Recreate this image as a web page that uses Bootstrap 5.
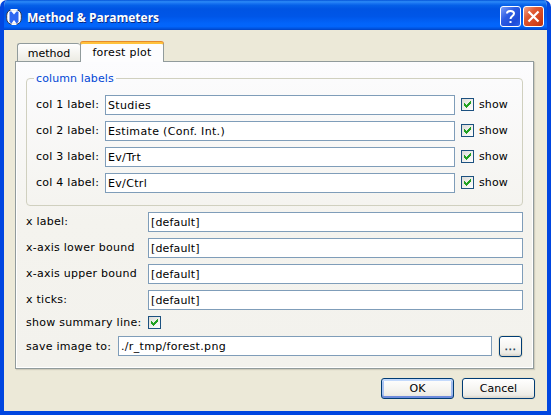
<!DOCTYPE html>
<html lang="en">
<head>
<meta charset="utf-8">
<title>Method &amp; Parameters</title>
<link href="https://cdn.jsdelivr.net/npm/bootstrap@5.3.0/dist/css/bootstrap.min.css" rel="stylesheet">
<style>
html,body{width:551px;height:415px;overflow:hidden}
body{margin:0;background:#fff;font:11px/14px "DejaVu Sans",sans-serif;color:#000}
.xp-window{width:551px;height:415px;background:#ece9d8;border-radius:7px 7px 0 0;overflow:hidden;border:solid #0046e0;border-width:0 4px 4px;position:relative}
.xp-window::after{content:"";position:absolute;inset:0 -4px -4px;border:solid #001ea0;border-width:0 1px 2px;border-left-color:#0831d9;border-right-width:2px;border-radius:7px 7px 0 0;pointer-events:none}
.titlebar{height:30px;margin:0 -4px;padding:3px 7px 0 6px;background:linear-gradient(#0453d8 0,#2d8cf8 6%,#1c77f2 10%,#0560e8 18%,#0054e3 30%,#0056e8 55%,#0264fa 78%,#0265fc 88%,#0054e0 95%,#0042c4 100%)}
.caption-text{font:bold 13px/16px "Open Sans",sans-serif;color:#fff;text-shadow:1px 1px 0 #0a2a84;white-space:nowrap;padding-left:5px}
.caption-text span{display:inline-block;transform:scaleX(.925);transform-origin:0 50%}
.cap-btn{width:21px;height:21px;border:1px solid #fff;border-radius:3px;background:linear-gradient(135deg,#7d9ff8,#2c5be3 40%,#1d4cd8 75%,#2c64ee);padding:0}
.cap-btn svg{display:block}
.cap-close{background:linear-gradient(135deg,#f3a48b,#e05a33 35%,#d1401a 75%,#b93210)}
.tabs-row{height:31px;padding:11px 0 0 12px}
.tab-item{border:1px solid #919b9c;border-bottom:0;border-radius:3px 3px 0 0;padding:0;text-align:center;color:#000;white-space:nowrap;font:11px/14px "DejaVu Sans",sans-serif}
.tab-method{width:63px;height:18px;padding-top:2px;background:linear-gradient(#fff,#ecebe3);border-right:0;margin-left:1px}
.tab-plot{width:84px;height:20px;background:#fdfdfe;border-top:2px solid #ffc23c;position:relative;z-index:2;margin-bottom:-1px;box-shadow:0 -1px 0 #e68b2c;letter-spacing:.25px}
.pane{margin-left:11px;width:519px;height:308px;border:1px solid #919b9c;background:linear-gradient(#fcfcfe,#f4f3ee 52%,#f3f2ed);box-shadow:1px 1px 1px #cfccbc,inset -1px -1px #fff,inset 1px 0 #fff;padding:9px 10px 0}
.group-box{width:497px;height:135px;margin-bottom:1px;position:relative;padding-top:24px}
.group-box::before{content:"";position:absolute;inset:7px 0 0;border:1px solid #d0d0bf;border-radius:4px}
.group-title{position:absolute;left:8px;top:1px;padding:0 2px;background:#fbfbfd;color:#0046d5;white-space:nowrap;letter-spacing:.12px}
.form-line{height:26px}
.lbl{white-space:nowrap;line-height:20px;flex:none;letter-spacing:.25px}
.xp-input.form-control{height:20px;min-height:0;border:1px solid #7f9db9;border-radius:0;background:#fff;padding:1px 2px 0;font:11px/17px "DejaVu Sans",sans-serif;letter-spacing:.33px;color:#000;box-shadow:none}
.xp-input.tight{letter-spacing:.15px}
.xp-check{width:13px;height:13px;border:1px solid #1c5180;background:linear-gradient(135deg,#dcdcd7,#fff);flex:none}
.xp-check svg{display:block}
.group-box .form-line{padding-left:10px}
.group-box .lbl{width:69px}
.group-box .xp-input{width:350px}
.group-box .xp-check{margin:3px 5px 0 6px}
.show-text{line-height:20px;letter-spacing:.1px}
.lower{padding-top:5px}
.lower .lbl{width:122px}
.lower .xp-input{width:375px}
.summary-line{height:20px}
.lower .summary-line .lbl{line-height:14px}
.lower .save-line .lbl{width:92px;line-height:22px}
.lower .save-line .xp-input{width:374px}
.xp-btn.btn{border:1px solid #003c74;border-radius:3px;background:linear-gradient(#fff,#f5f4f0 55%,#ecebe5 85%,#d8d2c6);font:11px/19px "DejaVu Sans",sans-serif;color:#000;padding:0;width:73px;height:21px;box-shadow:0 0 0 1px #e6e3d2}
.xp-btn.xp-default{box-shadow:inset 0 2px #c4dafc,inset 0 -2px #6d8bdc,inset 2px 0 #a9c3f2,inset -2px 0 #a0bbee}
.xp-btn.xp-dots{width:23px;margin-left:7px;font-size:11px;letter-spacing:.5px;line-height:20px;-webkit-text-stroke:.3px #153550;color:#153550}
.actions{gap:8px;padding:9px 12px 0 0}
</style>
<script src="https://cdn.jsdelivr.net/npm/bootstrap@5.3.0/dist/js/bootstrap.bundle.min.js"></script>
</head>
<body>
<svg class="d-none"><symbol id="tick" viewBox="0 0 11 11"><path d="M2 4h1v1h1v1h1V5h1V4h1V3h1V2h1v3H8v1H7v1H6v1H5v1H4V8H3V7H2z" fill="#21a121"/></symbol></svg>
<div class="xp-window">
 <header class="titlebar d-flex align-items-center">
  <svg class="flex-shrink-0" width="16" height="16" viewBox="0 0 16 16"><rect x=".7" y=".7" width="14.600" height="14.600" rx="5.500" fill="#fff" stroke="#343b50"/><path d="M4.500 0h7v1.500h-7zM5.500 14.500h5V16h-5z" fill="#fff"/><path d="M3.500 2.500h2L8 5.500l2.500-3h2V13l-2 1.500L8 11l-2.500 3.500-2-1.500z" fill="#2f68f2"/></svg>
  <div class="caption-text"><span>Method &amp; Parameters</span></div>
  <div class="ms-auto d-flex" style="gap:2px">
   <button class="cap-btn" aria-label="Help"><svg width="19" height="19" viewBox="0 0 19 19"><path d="M6 6.500C6 3 13 3 13 6.500c0 2.500-3.500 2.500-3.500 5.500" fill="none" stroke="#fff" stroke-width="2"/><path d="M8.500 14h2v2h-2z" fill="#fff"/></svg></button>
   <button class="cap-btn cap-close" aria-label="Close"><svg width="19" height="19" viewBox="0 0 19 19"><path d="M4.500 4.500l10 10M14.500 4.500l-10 10" stroke="#fff" stroke-width="2.200"/></svg></button>
  </div>
 </header>
 <div class="tabs-row d-flex align-items-end">
  <button class="tab-item tab-method">method</button>
  <button class="tab-item tab-plot">forest plot</button>
 </div>
 <main class="pane">
  <section class="group-box">
   <div class="group-title">column labels</div>
   <div class="form-line d-flex"><label class="lbl">col 1 label:</label><input class="form-control xp-input" value="Studies"><span class="xp-check"><svg width="11" height="11"><use href="#tick"/></svg></span><span class="show-text">show</span></div>
   <div class="form-line d-flex"><label class="lbl">col 2 label:</label><input class="form-control xp-input" value="Estimate (Conf. Int.)"><span class="xp-check"><svg width="11" height="11"><use href="#tick"/></svg></span><span class="show-text">show</span></div>
   <div class="form-line d-flex"><label class="lbl">col 3 label:</label><input class="form-control xp-input" value="Ev/Trt"><span class="xp-check"><svg width="11" height="11"><use href="#tick"/></svg></span><span class="show-text">show</span></div>
   <div class="form-line d-flex"><label class="lbl">col 4 label:</label><input class="form-control xp-input" value="Ev/Ctrl"><span class="xp-check"><svg width="11" height="11"><use href="#tick"/></svg></span><span class="show-text">show</span></div>
  </section>
  <section class="lower">
   <div class="form-line d-flex"><label class="lbl">x label:</label><input class="form-control xp-input tight" value="[default]"></div>
   <div class="form-line d-flex"><label class="lbl">x-axis lower bound</label><input class="form-control xp-input tight" value="[default]"></div>
   <div class="form-line d-flex"><label class="lbl">x-axis upper bound</label><input class="form-control xp-input tight" value="[default]"></div>
   <div class="form-line d-flex"><label class="lbl">x ticks:</label><input class="form-control xp-input tight" value="[default]"></div>
   <div class="summary-line d-flex"><label class="lbl">show summary line:</label><span class="xp-check"><svg width="11" height="11"><use href="#tick"/></svg></span></div>
   <div class="save-line d-flex"><label class="lbl">save image to:</label><input class="form-control xp-input" value="./r_tmp/forest.png"><button class="btn xp-btn xp-dots">...</button></div>
  </section>
 </main>
 <footer class="actions d-flex justify-content-end">
  <button class="btn xp-btn xp-default">OK</button>
  <button class="btn xp-btn">Cancel</button>
 </footer>
</div>
</body>
</html>
